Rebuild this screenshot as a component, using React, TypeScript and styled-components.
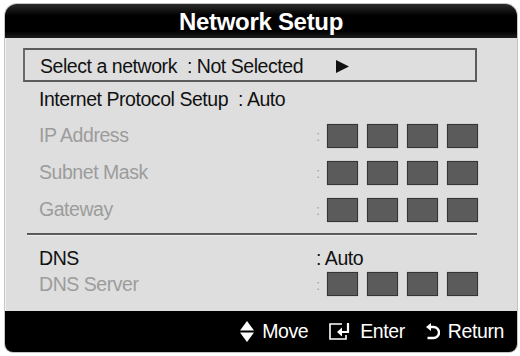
import React from 'react';
import styled, { createGlobalStyle } from 'styled-components';

const GlobalStyle = createGlobalStyle`
  html, body {
    margin: 0;
    padding: 0;
    background: #ffffff;
  }
  body {
    font-family: 'Liberation Sans', Arial, sans-serif;
  }
`;

const Page = styled.div`
  width: 520px;
  height: 356px;
  padding: 4px 3px 4px 5px;
  box-sizing: border-box;
`;

const Panel = styled.div`
  height: 100%;
  display: flex;
  flex-direction: column;
  border-radius: 12px 12px 8px 8px;
  overflow: hidden;
  background: #dedede;
  box-shadow: 0 0 0 1px #c4c4c4;
`;

const TitleBar = styled.div`
  height: 34px;
  flex: none;
  display: flex;
  align-items: center;
  justify-content: center;
  padding-top: 2px;
  box-sizing: border-box;
  background: linear-gradient(#2a2a2a 0%, #000 35%, #000 80%, #1c1c1c 100%);
  color: #fff;
  font-size: 24px;
  font-weight: 700;
  letter-spacing: -0.3px;
`;

const Body = styled.div`
  flex: 1;
  display: flex;
  flex-direction: column;
  padding: 10px 40px 0 17px;
  border-left: 1px solid #f2f2f2;
`;

const SelectBox = styled.div`
  height: 34px;
  box-sizing: border-box;
  display: flex;
  align-items: center;
  padding: 2px 0 0 15px;
  border: 2px solid #5c5c5c;
  border-left-color: #6a6a6a;
  color: #111;
`;

const Row = styled.div<{ $h: number; $muted?: boolean }>`
  height: ${(p) => p.$h}px;
  display: flex;
  align-items: center;
  padding-left: 16px;
  color: ${(p) => (p.$muted ? '#9c9c9c' : '#111')};
`;

const Text = styled.span`
  font-size: 19.5px;
  letter-spacing: -0.45px;
  white-space: pre;
`;

const Label = styled(Text)`
  width: 277px;
  flex: none;
`;

const Colon = styled.span`
  width: 11px;
  flex: none;
  color: #a8a8a8;
  font-size: 15px;
`;

const Boxes = styled.div`
  display: flex;
  gap: 9px;
`;

const Box = styled.div`
  width: 29px;
  height: 22px;
  background: #5b5b5b;
  border: 1px solid #353535;
  box-shadow: 0 0 1px rgba(0, 0, 0, 0.35);
`;

const Arrow = styled.svg`
  margin-left: 33px;
  flex: none;
`;

const Divider = styled.div`
  height: 2px;
  margin: 5px 0 8px 4px;
  background: #5a5a5a;
  border-bottom: 1px solid #f0f0f0;
`;

const Footer = styled.div`
  height: 41px;
  flex: none;
  display: flex;
  align-items: center;
  justify-content: flex-end;
  gap: 21px;
  padding-right: 13px;
  background: #000;
  color: #fff;
`;

const Hint = styled.div`
  display: flex;
  align-items: center;
  gap: 8px;
  font-size: 19.5px;
  letter-spacing: -0.4px;
`;

const IpBoxes = () => (
  <>
    <Colon>:</Colon>
    <Boxes>
      <Box />
      <Box />
      <Box />
      <Box />
    </Boxes>
  </>
);

const MoveIcon = () => (
  <svg width="14" height="21" viewBox="0 0 14 21">
    <path d="M7 0 L14 9.5 L0 9.5 Z" fill="#fff" />
    <path d="M0 11.5 L14 11.5 L7 21 Z" fill="#fff" />
  </svg>
);

const EnterIcon = () => (
  <svg width="23" height="17" viewBox="0 0 23 17">
    <path d="M13 1 H1 V16 H17 V12" fill="none" stroke="#fff" strokeWidth="1.6" />
    <path d="M19 0 V9 H11" fill="none" stroke="#fff" strokeWidth="2.2" />
    <path d="M8 9 L13 4.5 L13 13.5 Z" fill="#fff" />
  </svg>
);

const ReturnIcon = () => (
  <svg width="14" height="18" viewBox="0 0 14 18">
    <path d="M4 4 H7.5 A5.5 5.5 0 0 1 7.5 15 H1.5" fill="none" stroke="#fff" strokeWidth="2.4" />
    <path d="M0 4 L5 0 L5 8 Z" fill="#fff" />
  </svg>
);

export default function App() {
  return (
    <>
      <GlobalStyle />
      <Page>
        <Panel>
          <TitleBar>Network Setup</TitleBar>
          <Body>
            <SelectBox>
              <Text>Select a network  : Not Selected</Text>
              <Arrow width="13" height="13" viewBox="0 0 13 13">
                <path d="M0 0 L13 6.5 L0 13 Z" fill="#111" />
              </Arrow>
            </SelectBox>
            <Row $h={35}>
              <Text>Internet Protocol Setup  : Auto</Text>
            </Row>
            <Row $h={37} $muted>
              <Label>IP Address</Label>
              <IpBoxes />
            </Row>
            <Row $h={37} $muted>
              <Label>Subnet Mask</Label>
              <IpBoxes />
            </Row>
            <Row $h={37} $muted>
              <Label>Gateway</Label>
              <IpBoxes />
            </Row>
            <Divider />
            <Row $h={28}>
              <Label>DNS</Label>
              <Text>: Auto</Text>
            </Row>
            <Row $h={24} $muted>
              <Label>DNS Server</Label>
              <IpBoxes />
            </Row>
          </Body>
          <Footer>
            <Hint>
              <MoveIcon />
              Move
            </Hint>
            <Hint>
              <EnterIcon />
              Enter
            </Hint>
            <Hint>
              <ReturnIcon />
              Return
            </Hint>
          </Footer>
        </Panel>
      </Page>
    </>
  );
}
